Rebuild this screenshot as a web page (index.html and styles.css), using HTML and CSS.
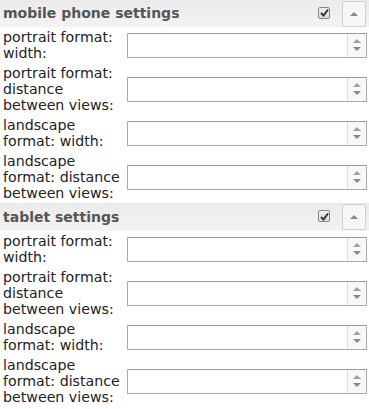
FILE: index.html
```html
<!DOCTYPE html>
<html>
<head>
<meta charset="utf-8">
<link rel="stylesheet" href="styles.css">
</head>
<body>
<div class="panel">
  <div class="head">
    <span class="title">mobile phone settings</span>
    <span class="check"><svg width="9" height="9" viewBox="0 0 9 9"><path d="M1 5 L3.5 7.5 L8 1.5" fill="none" stroke="#333" stroke-width="2"/></svg></span>
    <span class="toggle"><span class="tri-up"></span></span>
  </div>
  <div class="row">
    <div class="lbl">portrait format: width:</div>
    <div class="spin"><div class="arrows"><span class="up"></span><span class="down"></span></div></div>
  </div>
  <div class="row">
    <div class="lbl">portrait format: distance between views:</div>
    <div class="spin"><div class="arrows"><span class="up"></span><span class="down"></span></div></div>
  </div>
  <div class="row">
    <div class="lbl">landscape format: width:</div>
    <div class="spin"><div class="arrows"><span class="up"></span><span class="down"></span></div></div>
  </div>
  <div class="row">
    <div class="lbl">landscape format: distance between views:</div>
    <div class="spin"><div class="arrows"><span class="up"></span><span class="down"></span></div></div>
  </div>
  <div class="head">
    <span class="title">tablet settings</span>
    <span class="check"><svg width="9" height="9" viewBox="0 0 9 9"><path d="M1 5 L3.5 7.5 L8 1.5" fill="none" stroke="#333" stroke-width="2"/></svg></span>
    <span class="toggle"><span class="tri-up"></span></span>
  </div>
  <div class="row">
    <div class="lbl">portrait format: width:</div>
    <div class="spin"><div class="arrows"><span class="up"></span><span class="down"></span></div></div>
  </div>
  <div class="row">
    <div class="lbl">portrait format: distance between views:</div>
    <div class="spin"><div class="arrows"><span class="up"></span><span class="down"></span></div></div>
  </div>
  <div class="row">
    <div class="lbl">landscape format: width:</div>
    <div class="spin"><div class="arrows"><span class="up"></span><span class="down"></span></div></div>
  </div>
  <div class="row">
    <div class="lbl">landscape format: distance between views:</div>
    <div class="spin"><div class="arrows"><span class="up"></span><span class="down"></span></div></div>
  </div>
</div>
</body>
</html>
```
FILE: styles.css
```css
html, body {
  margin: 0;
  padding: 0;
  background: #fff;
}
.panel {
  font-family: "DejaVu Sans", Verdana, sans-serif;
  font-size: 14.2px;
  line-height: 16px;
  color: #222;
  width: 369px;
}
.head {
  height: 27px;
  display: flex;
  align-items: center;
  background: linear-gradient(#ebebeb, #f3f3f3);
  padding-left: 3px;
}
.head + .row {
  margin-top: 0;
}
.row + .head {
  height: 28px;
}
.title {
  flex: 1;
  font-weight: bold;
  font-size: 14px;
  color: #555;
  padding-bottom: 1px;
}
.check {
  width: 10px;
  height: 10px;
  border: 1px solid #888;
  border-radius: 2px;
  background: linear-gradient(#f0f0f0, #dcdcdc);
  display: flex;
  align-items: center;
  justify-content: center;
  margin-right: 12px;
  margin-bottom: 2px;
}
.toggle {
  width: 22px;
  height: 24px;
  border: 1px solid #d0d0d0;
  border-radius: 2px;
  background: #f6f6f6;
  display: flex;
  align-items: center;
  justify-content: center;
  margin-right: 3px;
  align-self: flex-start;
  margin-top: 1px;
}
.tri-up {
  width: 0;
  height: 0;
  border-left: 4px solid transparent;
  border-right: 4px solid transparent;
  border-bottom: 4px solid #888;
}
.row {
  display: flex;
  align-items: center;
  padding-left: 3px;
}
.lbl {
  width: 122px;
  padding: 2px 0;
  flex: none;
}
.spin {
  margin-left: 2px;
  width: 238px;
  height: 23px;
  border: 1px solid #aaa;
  border-top-color: #999;
  border-radius: 1px;
  display: flex;
  justify-content: flex-end;
  background: #fff;
}
.arrows {
  width: 18px;
  border-left: 1px solid #ddd;
  background: #f8f8f8;
  display: flex;
  flex-direction: column;
  align-items: center;
  justify-content: space-around;
  padding: 3px 0;
}
.up {
  width: 0;
  height: 0;
  border-left: 4px solid transparent;
  border-right: 4px solid transparent;
  border-bottom: 4px solid #a0a0a0;
}
.down {
  width: 0;
  height: 0;
  border-left: 4px solid transparent;
  border-right: 4px solid transparent;
  border-top: 4px solid #888;
}
```
